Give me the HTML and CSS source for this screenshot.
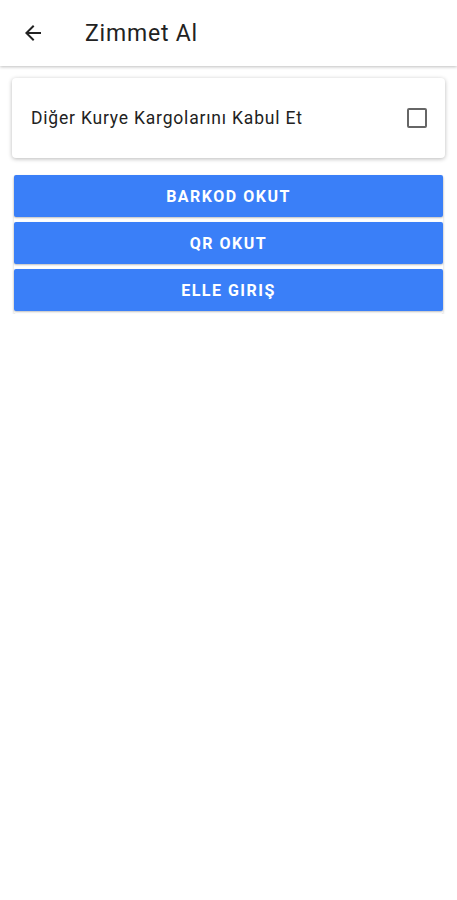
FILE: index.html
```html
<!DOCTYPE html>
<html>
    <head>
        <meta charset="utf-8">
        <link rel="stylesheet" href="styles.css">
    </head>
<body>
    <div class="header">
        <button class="backBtn">
            <svg width="24" height="24" viewBox="0 0 24 24"><path d="M20 11H7.83l5.59-5.59L12 4l-8 8 8 8 1.41-1.41L7.83 13H20v-2z" fill="#222"/></svg>
        </button>
        <div class="title">Zimmet Al</div>
    </div>
    <div class="content">
        <div class="card">
            <span class="cardText">Diğer Kurye Kargolarını Kabul Et</span>
            <span class="checkbox"></span>
        </div>
        <div class="buttons">
            <button class="mainBtn">BARKOD OKUT</button>
            <button class="mainBtn">QR OKUT</button>
            <button class="mainBtn">ELLE GIRIŞ</button>
        </div>
    </div>
</body>
</html>
```

FILE: styles.css
```css
body {
    margin: 0;
    background-color: #fff;
    font-family: Roboto, "Noto Sans", sans-serif;
}

.header {
    height: 66px;
    display: flex;
    align-items: center;
    box-shadow: 0 1px 3px rgba(0, 0, 0, 0.25);
    background-color: #fff;
}

.backBtn {
    width: 24px;
    height: 24px;
    padding: 0;
    margin-left: 21px;
    border: none;
    background: none;
    display: flex;
}

.title {
    margin-left: 40px;
    font-size: 23px;
    letter-spacing: 0.8px;
    color: #222;
    margin-top: 1px;
}

.content {
    padding: 12px 12px 0 12px;
}

.card {
    height: 80px;
    border-radius: 4px;
    box-shadow: 0 1px 4px rgba(0, 0, 0, 0.28);
    display: flex;
    align-items: center;
    justify-content: space-between;
    padding: 0 18px 0 19px;
}

.cardText {
    font-size: 17.5px;
    letter-spacing: 0.8px;
    color: #222;
}

.checkbox {
    width: 16px;
    height: 16px;
    border: 2px solid #666;
    border-radius: 2px;
}

.buttons {
    margin: 17px 2px 0 2px;
    display: flex;
    flex-direction: column;
    gap: 5px;
    padding-bottom: 3px;
    box-shadow: 0 2px 3px rgba(0, 0, 0, 0.18);
    border-radius: 2px;
}

.mainBtn {
    height: 42px;
    border: none;
    border-radius: 2px;
    background-color: #3a7ff8;
    color: #fff;
    font-family: Roboto, "Noto Sans", sans-serif;
    font-size: 16px;
    font-weight: bold;
    letter-spacing: 1.5px;
    box-shadow: 0 1px 2px rgba(0, 0, 0, 0.25);
}
```
